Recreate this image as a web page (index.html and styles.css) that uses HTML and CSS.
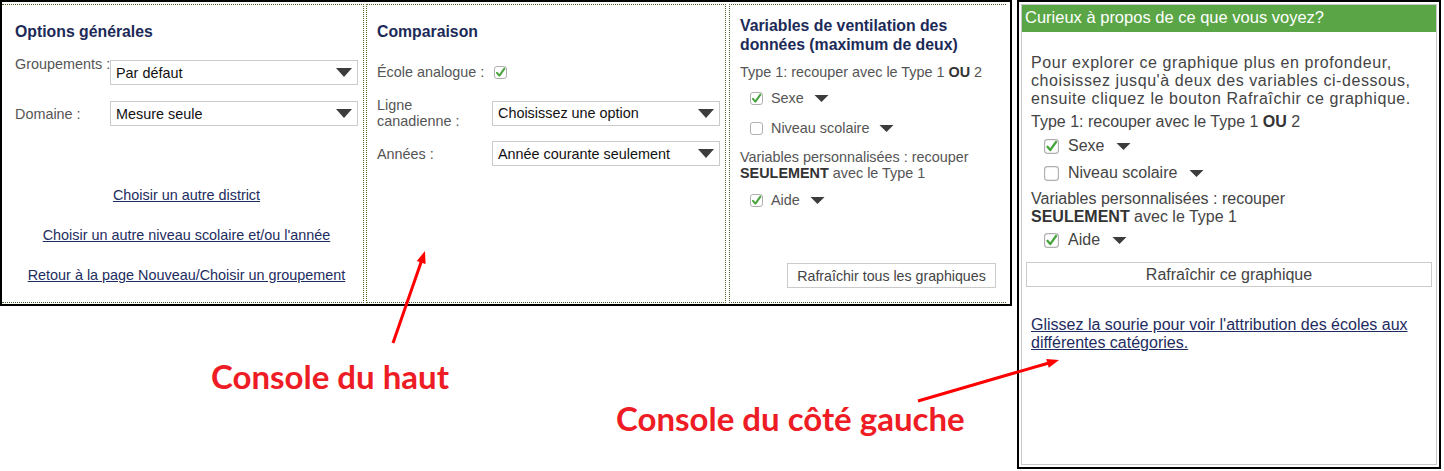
FILE: index.html
```html
<!DOCTYPE html>
<html lang="fr">
<head>
<meta charset="utf-8">
<title>Consoles</title>
<link rel="stylesheet" href="styles.css">
</head>
<body>
<div class="page">
  <div class="top-console">
    <section class="col col1">
      <h2 class="col-title">Options générales</h2>
      <div class="field field-top g1">
        <span class="label nowrap">Groupements :</span>
        <div class="select"><span>Par défaut</span><svg class="caret" viewBox="0 0 16 9"><polygon points="0,0 16,0 8,9"/></svg></div>
      </div>
      <div class="field g1 f-domaine">
        <span class="label nowrap">Domaine :</span>
        <div class="select"><span>Mesure seule</span><svg class="caret" viewBox="0 0 16 9"><polygon points="0,0 16,0 8,9"/></svg></div>
      </div>
      <div class="links">
        <a href="#">Choisir un autre district</a>
        <a href="#">Choisir un autre niveau scolaire et/ou l'année</a>
        <a href="#">Retour à la page Nouveau/Choisir un groupement</a>
      </div>
    </section>
    <section class="col col2">
      <h2 class="col-title">Comparaison</h2>
      <div class="field g2 f-ecole">
        <span class="label nowrap">École analogue :</span>
        <svg class="cb" viewBox="0 0 13 13"><rect x="0.5" y="0.5" width="12" height="12" rx="2.5"/><path d="M3 6.8 L5.4 9.6 L10.4 2.6"/></svg>
      </div>
      <div class="field g2 f-ligne">
        <span class="label">Ligne<br>canadienne :</span>
        <div class="select"><span>Choisissez une option</span><svg class="caret" viewBox="0 0 16 9"><polygon points="0,0 16,0 8,9"/></svg></div>
      </div>
      <div class="field g2 f-annees">
        <span class="label nowrap">Années :</span>
        <div class="select"><span>Année courante seulement</span><svg class="caret" viewBox="0 0 16 9"><polygon points="0,0 16,0 8,9"/></svg></div>
      </div>
    </section>
    <section class="col col3">
      <h2 class="col-title two">Variables de ventilation des données (maximum de deux)</h2>
      <p class="t-type">Type 1: recouper avec le Type 1 <b>OU</b> 2</p>
      <div class="opt o-sexe">
        <svg class="cb" viewBox="0 0 13 13"><rect x="0.5" y="0.5" width="12" height="12" rx="2.5"/><path d="M3 6.8 L5.4 9.6 L10.4 2.6"/></svg>
        <span>Sexe</span>
        <svg class="mini" viewBox="0 0 14 7"><polygon points="0,0 14,0 7,7"/></svg>
      </div>
      <div class="opt o-niveau">
        <svg class="cb" viewBox="0 0 13 13"><rect x="0.5" y="0.5" width="12" height="12" rx="2.5"/></svg>
        <span>Niveau scolaire</span>
        <svg class="mini" viewBox="0 0 14 7"><polygon points="0,0 14,0 7,7"/></svg>
      </div>
      <p class="t-perso">Variables personnalisées : recouper<br><b>SEULEMENT</b> avec le Type 1</p>
      <div class="opt o-aide">
        <svg class="cb" viewBox="0 0 13 13"><rect x="0.5" y="0.5" width="12" height="12" rx="2.5"/><path d="M3 6.8 L5.4 9.6 L10.4 2.6"/></svg>
        <span>Aide</span>
        <svg class="mini" viewBox="0 0 14 7"><polygon points="0,0 14,0 7,7"/></svg>
      </div>
      <div class="btn-row"><button class="btn">Rafraîchir tous les graphiques</button></div>
    </section>
  </div>

  <aside class="side-console">
    <div class="side-inner">
      <div class="side-head">Curieux à propos de ce que vous voyez?</div>
      <div class="side-body">
        <p class="s-intro">Pour explorer ce graphique plus en profondeur, choisissez jusqu'à deux des variables ci-dessous, ensuite cliquez le bouton Rafraîchir ce graphique.</p>
        <p class="s-type">Type 1: recouper avec le Type 1 <b>OU</b> 2</p>
        <div class="sopt so-sexe">
          <svg class="scb" viewBox="0 0 13 13"><rect x="0.5" y="0.5" width="12" height="12" rx="2.5"/><path d="M3 6.8 L5.4 9.6 L10.4 2.6"/></svg>
          <span>Sexe</span>
          <svg class="smini" viewBox="0 0 14 7"><polygon points="0,0 14,0 7,7"/></svg>
        </div>
        <div class="sopt so-niveau">
          <svg class="scb" viewBox="0 0 13 13"><rect x="0.5" y="0.5" width="12" height="12" rx="2.5"/></svg>
          <span>Niveau scolaire</span>
          <svg class="smini" viewBox="0 0 14 7"><polygon points="0,0 14,0 7,7"/></svg>
        </div>
        <p class="s-perso">Variables personnalisées : recouper<br><b>SEULEMENT</b> avec le Type 1</p>
        <div class="sopt so-aide">
          <svg class="scb" viewBox="0 0 13 13"><rect x="0.5" y="0.5" width="12" height="12" rx="2.5"/><path d="M3 6.8 L5.4 9.6 L10.4 2.6"/></svg>
          <span>Aide</span>
          <svg class="smini" viewBox="0 0 14 7"><polygon points="0,0 14,0 7,7"/></svg>
        </div>
        <button class="sbtn">Rafraîchir ce graphique</button>
        <a class="s-link" href="#">Glissez la sourie pour voir l'attribution des écoles aux différentes catégories.</a>
      </div>
    </div>
  </aside>

  <div class="note note-haut">Console du haut</div>
  <div class="note note-gauche">Console du côté gauche</div>
  <svg class="arrows" viewBox="0 0 1444 471">
    <line x1="393" y1="343" x2="421.5" y2="261"/>
    <polygon points="425,251 425.6,263.9 416.8,260.9"/>
    <line x1="918" y1="401" x2="1048" y2="363.2"/>
    <polygon points="1059,360 1048.8,367.7 1046.2,359.1"/>
  </svg>
</div>
</body>
</html>
```

FILE: styles.css
```css
* { box-sizing: border-box; }
html, body { margin: 0; padding: 0; background: #fff; }
body {
  font-family: "Liberation Sans", Arial, sans-serif;
  color: #555;
  width: 1444px;
  height: 471px;
  overflow: hidden;
}
p { margin: 0; }
b { color: #333; }

.page {
  position: relative;
  display: flex;
  align-items: flex-start;
  gap: 5px;
  width: 1444px;
  height: 471px;
}

/* ---------- top console ---------- */
.top-console {
  width: 1012px;
  height: 306px;
  border: 2px solid #000;
  padding: 2px 4px 1px 0;
  display: flex;
  font-size: 14.4px;
}
.col {
  height: 299px;
  border: 1px dotted #4a6424;
  display: flex;
  flex-direction: column;
}
.col1 { width: 362px; border-left: none; padding: 17px 5px 0 13px; }
.col2 { width: 360px; margin-left: 2px; padding: 17px 5px 0 10px; }
.col3 { width: 277px; margin-left: 3px; border-right: none; padding: 11px 10px 0 10px; }

.col-title {
  margin: 0;
  font-size: 15.8px;
  line-height: 20px;
  font-weight: bold;
  color: #1c2a58;
}
.col-title.two { line-height: 19px; }

.field { display: grid; align-items: center; }
.g1 { grid-template-columns: 95px 1fr; }
.g2 { grid-template-columns: 115px 1fr; }
.field-top { align-items: start; margin-top: 14px; }
.field-top .select { margin-top: 4px; }
.field .label { line-height: 16px; color: #555; }
.nowrap { white-space: nowrap; }
.f-domaine { margin-top: 16px; }

.select {
  height: 25px;
  border: 1px solid #cbcbcb;
  background: #fff;
  display: flex;
  align-items: center;
  justify-content: space-between;
  padding: 0 5px 0 5px;
  color: #111;
  font-size: 14.4px;
}
.caret { width: 16px; height: 9px; fill: #3c3c3c; }

.links {
  margin-top: 60px;
  display: flex;
  flex-direction: column;
  align-items: center;
  gap: 22px;
}
.links a {
  color: #1d2c60;
  line-height: 18px;
  text-decoration: underline;
}

.f-ecole { margin-top: 22px; height: 16px; }
.f-ligne { margin-top: 17px; }
.f-annees { margin-top: 12px; }

.cb { width: 13px; height: 13px; display: block; }
.cb rect, .scb rect { fill: #fff; stroke: #b0b0b0; stroke-width: 1; }
.cb path, .scb path { fill: none; stroke: #47a33e; stroke-width: 2; stroke-linecap: round; stroke-linejoin: round; }
.f-ecole .cb { margin-left: 2px; }

.t-type { margin-top: 10px; line-height: 16px; }
.opt {
  display: flex;
  align-items: center;
  height: 18px;
  padding-left: 10px;
  gap: 8px;
}
.opt .mini { width: 15px; height: 7px; fill: #3c3c3c; margin-left: 2px; }
.o-sexe { margin-top: 9px; }
.o-niveau { margin-top: 12px; }
.t-perso { margin-top: 12px; line-height: 16px; }
.o-aide { margin-top: 10px; }
.btn-row { margin-top: 54px; display: flex; justify-content: flex-end; }
.btn {
  font-family: "Liberation Sans", Arial, sans-serif;
  font-size: 14.2px;
  color: #444;
  background: #fff;
  border: 1px solid #cbcbcb;
  height: 25px;
  width: 209px;
  padding: 0;
}

/* ---------- side console ---------- */
.side-console {
  width: 424px;
  height: 469px;
  border: 2px solid #000;
  padding: 2px;
}
.side-inner {
  height: 100%;
  border: 1px solid #c8c8c8;
  display: flex;
  flex-direction: column;
}
.side-head {
  height: 27px;
  background: #5aa646;
  color: #fff;
  font-size: 16.5px;
  line-height: 25px;
  padding-left: 3px;
}
.side-body {
  padding: 0 4px;
  font-size: 16px;
  color: #444;
  display: flex;
  flex-direction: column;
}
.s-intro { margin-top: 22px; line-height: 18px; padding-left: 5px; letter-spacing: 0.57px; }
.s-type { margin-top: 5px; line-height: 18px; padding-left: 5px; }
.sopt {
  display: flex;
  align-items: center;
  height: 20px;
  padding-left: 18px;
  gap: 9px;
}
.scb { width: 15px; height: 15px; display: block; }
.smini { width: 15px; height: 7px; fill: #3c3c3c; margin-left: 3px; }
.so-sexe { margin-top: 5px; }
.so-niveau { margin-top: 7px; }
.s-perso { margin-top: 7px; line-height: 18px; padding-left: 5px; }
.so-aide { margin-top: 4px; }
.sbtn {
  margin-top: 12px;
  height: 25px;
  width: 100%;
  border: 1px solid #cbcbcb;
  background: #fff;
  color: #444;
  font-family: "Liberation Sans", Arial, sans-serif;
  font-size: 16px;
  padding: 0;
}
.s-link {
  margin-top: 29px;
  padding-left: 5px;
  line-height: 18px;
  color: #1d2c60;
  text-decoration: underline;
}

/* ---------- annotations ---------- */
.note {
  position: absolute;
  font-family: Lato, "Open Sans", sans-serif;
  font-weight: bold;
  font-size: 33px;
  line-height: 1;
  color: #ee1c25;
  white-space: nowrap;
}
.note-haut { left: 211px; top: 360px; }
.note-gauche { left: 616px; top: 402px; }
.arrows {
  position: absolute;
  left: 0;
  top: 0;
  width: 1444px;
  height: 471px;
  pointer-events: none;
}
.arrows line { stroke: #ff0000; stroke-width: 3; }
.arrows polygon { fill: #ff0000; }
```
